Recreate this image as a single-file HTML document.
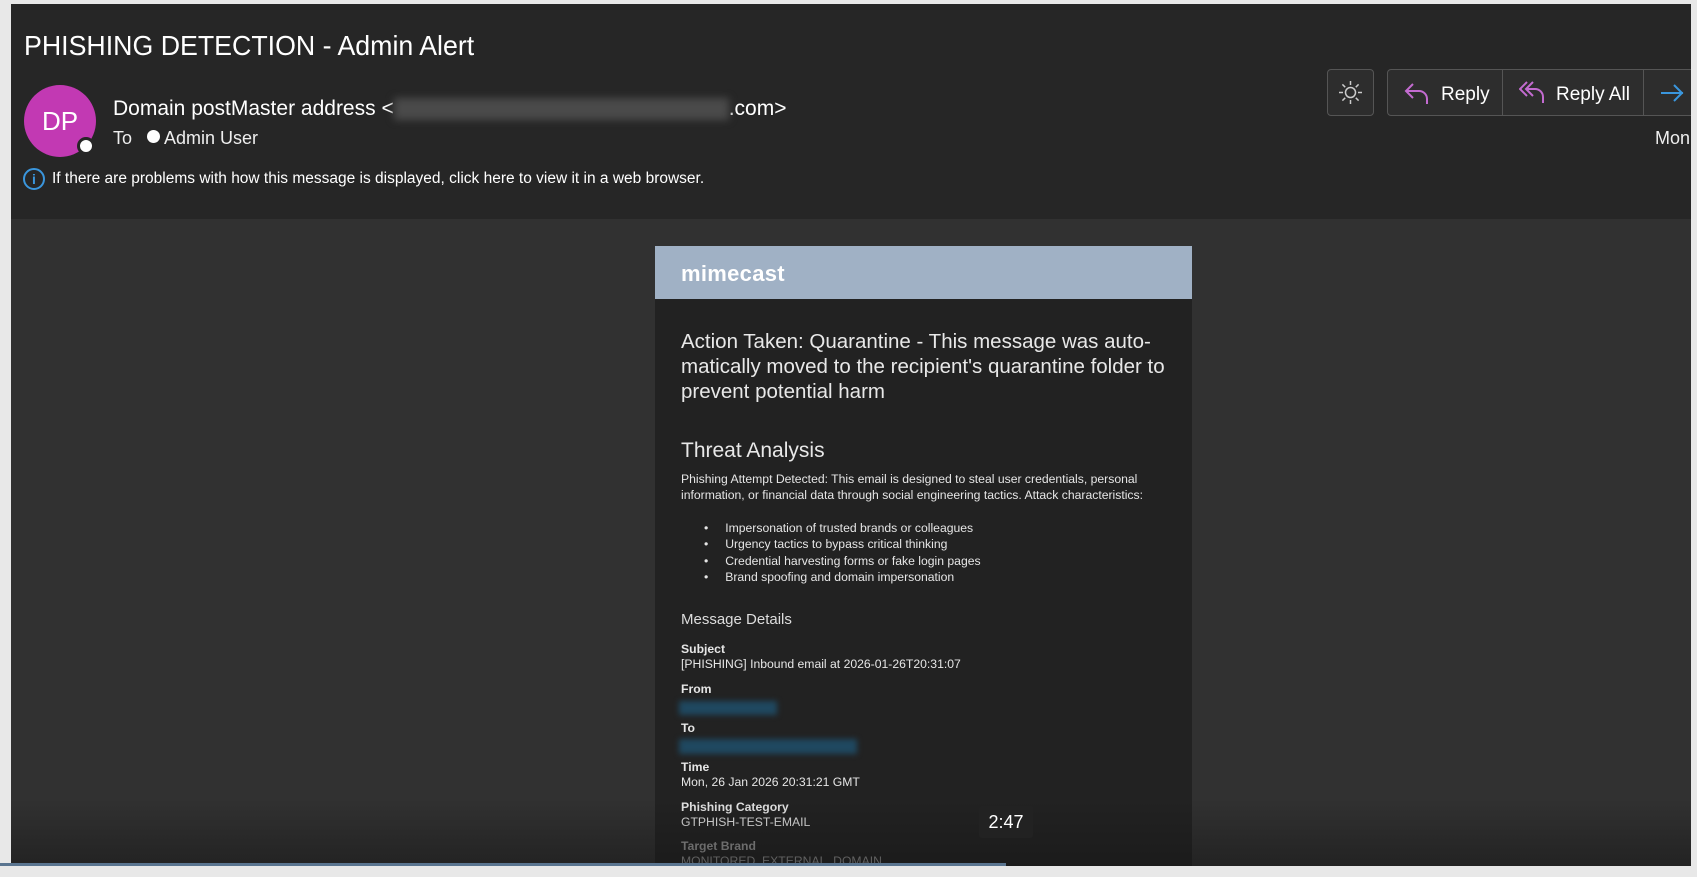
<!DOCTYPE html>
<html><head><meta charset="utf-8"><style>
*{margin:0;padding:0;box-sizing:border-box}
body{width:1697px;height:877px;background:#e8e8e8;position:relative;overflow:hidden;font-family:"Liberation Sans",sans-serif;color:#fff}
.win{position:absolute;left:11px;top:4px;width:1680px;height:862px;background:#262626;overflow:hidden}
.abs{position:absolute;white-space:nowrap}
.body{position:absolute;left:0;top:215px;width:1680px;height:660px;background:#313131}
.card{position:absolute;left:644px;top:27px;width:537px;height:640px;background:#222}
.mh{height:53px;background:#a0b1c5;position:relative}
.btn{position:absolute;border:1px solid #555;background:#2d2d2d;border-radius:4px}
.t{font-size:12.2px;color:#e6e6e6}
.b{font-weight:bold}
</style></head><body>
<div class="win">
<div class="abs" style="left:13px;top:26px;font-size:28px;color:#fff;transform:scaleX(0.955);transform-origin:0 0">PHISHING DETECTION - Admin Alert</div>
<div class="abs" style="left:13px;top:81px;width:72px;height:72px;border-radius:50%;background:#c239b3;font-size:26px;text-align:center;line-height:72px">DP</div>
<div class="abs" style="left:66px;top:133px;width:18px;height:18px;border-radius:50%;background:#fff;border:3px solid #262626"></div>
<div class="abs" style="left:102px;top:93px;font-size:21px;color:#fff">Domain postMaster address &lt;<span style="display:inline-block;width:335px;height:22px;vertical-align:middle;background:#4a4a4a;filter:blur(4px)"></span>.com&gt;</div>
<div class="abs" style="left:102px;top:124px;font-size:18px;color:#eee">To &nbsp;&nbsp;<span style="display:inline-block;width:13px;height:13px;border-radius:50%;background:#fff;vertical-align:1px"></span> Admin User</div>
<div class="abs" style="left:12px;top:164px;width:22px;height:22px;border:2px solid #3a96dd;border-radius:50%;color:#3a96dd;font-size:14px;text-align:center;line-height:18px;font-weight:bold">i</div>
<div class="abs" style="left:41px;top:166px;font-size:15.5px;color:#fff">If there are problems with how this message is displayed, click here to view it in a web browser.</div>
<div class="btn" style="left:1316px;top:65px;width:47px;height:47px">
<svg width="47" height="47" viewBox="0 0 47 47" style="position:absolute;left:-1px;top:-1px"><g stroke="#ccc" stroke-width="1.5" fill="none"><circle cx="23.5" cy="23.5" r="5"/><path d="M23.5 12v4M23.5 31v4M12 23.5h4M31 23.5h4M15.4 15.4l2.8 2.8M28.8 28.8l2.8 2.8M15.4 31.6l2.8-2.8M28.8 18.2l2.8-2.8"/></g></svg></div>
<div class="btn" style="left:1376px;top:65px;width:320px;height:47px;border-radius:4px 0 0 4px"></div>
<div class="abs" style="left:1491px;top:66px;width:1px;height:45px;background:#555"></div>
<div class="abs" style="left:1632px;top:66px;width:1px;height:45px;background:#555"></div>
<svg class="abs" style="left:1393px;top:77px" width="30" height="26" viewBox="0 0 30 26"><path d="M9 3L2 10l7 7M2 10h13a8 8 0 0 1 8 8v5" stroke="#c36bd0" stroke-width="2" fill="none"/></svg>
<div class="abs" style="left:1430px;top:80px;font-size:19px">Reply</div>
<svg class="abs" style="left:1508px;top:75px" width="30" height="28" viewBox="0 0 30 28"><path d="M8 3L1 10l7 7M14 3L7 10l7 7M7 10h9a8 8 0 0 1 8 8v6" stroke="#c36bd0" stroke-width="2" fill="none"/></svg>
<div class="abs" style="left:1545px;top:80px;font-size:19px">Reply All</div>
<svg class="abs" style="left:1648px;top:79px" width="28" height="20" viewBox="0 0 28 20"><path d="M2 10h22M15 2l8 8-8 8" stroke="#3a96dd" stroke-width="2" fill="none"/></svg>
<div class="abs" style="left:1644px;top:124px;font-size:18px;color:#eee">Mon</div>

<div class="body">
<div class="card">
<div class="mh"><div class="abs" style="left:26px;top:15px;font-size:22px;font-weight:bold;color:#fff;letter-spacing:0.3px">mimecast</div></div>
<div class="abs" style="left:26px;top:83px;width:495px;font-size:20.5px;line-height:25px;color:#e8e8e8;white-space:normal">Action Taken: Quarantine - This message was auto-matically moved to the recipient's quarantine folder to prevent potential harm</div>
<div class="abs" style="left:26px;top:193px;font-size:21px;color:#e8e8e8">Threat Analysis</div>
<div class="abs t" style="left:26px;top:225px;width:490px;line-height:16px;white-space:normal">Phishing Attempt Detected: This email is designed to steal user credentials, personal information, or financial data through social engineering tactics. Attack characteristics:</div>
<div class="abs t" style="left:49px;top:274px;line-height:16.3px">•&nbsp;&nbsp;&nbsp;&nbsp;&nbsp;Impersonation of trusted brands or colleagues<br>•&nbsp;&nbsp;&nbsp;&nbsp;&nbsp;Urgency tactics to bypass critical thinking<br>•&nbsp;&nbsp;&nbsp;&nbsp;&nbsp;Credential harvesting forms or fake login pages<br>•&nbsp;&nbsp;&nbsp;&nbsp;&nbsp;Brand spoofing and domain impersonation</div>
<div class="abs" style="left:26px;top:365px;font-size:15px;color:#ddd">Message Details</div>
<div class="abs t" style="left:26px;top:396px;line-height:15px"><span class="b">Subject</span><br>[PHISHING] Inbound email at 2026-01-26T20:31:07</div>
<div class="abs t b" style="left:26px;top:436px">From</div>
<div class="abs" style="left:24px;top:455px;width:98px;height:14px;background:#1f4860;filter:blur(3px)"></div>
<div class="abs t b" style="left:26px;top:475px">To</div>
<div class="abs" style="left:24px;top:493px;width:178px;height:15px;background:#1f4860;filter:blur(3px)"></div>
<div class="abs t" style="left:26px;top:514px;line-height:15px"><span class="b">Time</span><br>Mon, 26 Jan 2026 20:31:21 GMT</div>
<div class="abs t" style="left:26px;top:554px;line-height:15px"><span class="b">Phishing Category</span><br>GTPHISH-TEST-EMAIL</div>
<div class="abs t" style="left:26px;top:593px;line-height:15px;color:#999"><span class="b">Target Brand</span><br>MONITORED_EXTERNAL_DOMAIN</div>
</div>
<div class="abs" style="left:0;top:580px;width:1680px;height:70px;background:linear-gradient(rgba(20,20,20,0),rgba(20,20,20,0.5))"></div>
<div class="abs" style="left:968px;top:587px;width:54px;height:32px;background:#222;border-radius:3px;font-size:18px;text-align:center;line-height:32px">2:47</div>
</div>
</div>
<div class="abs" style="left:0;top:863px;width:1006px;height:3px;background:#5a7590"></div>
</body></html>
